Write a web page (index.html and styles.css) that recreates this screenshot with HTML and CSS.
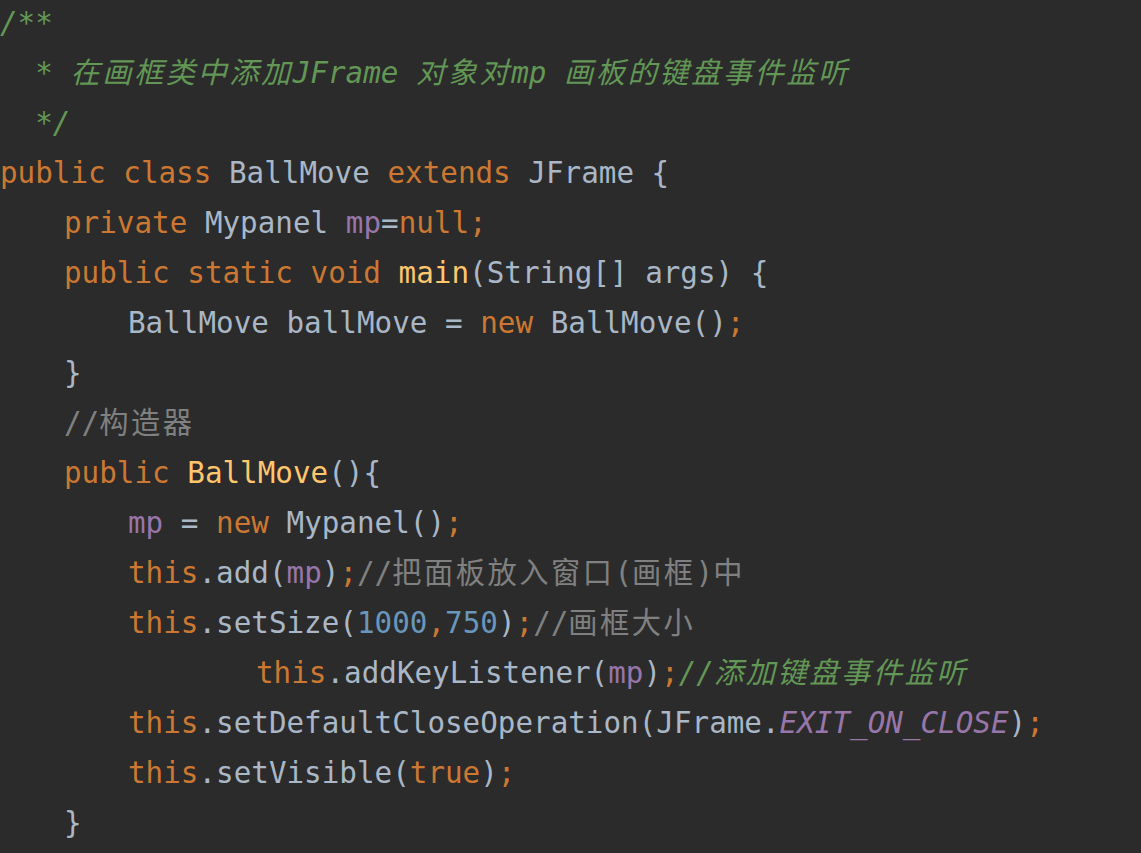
FILE: index.html
```html
<!DOCTYPE html>
<html lang="zh">
<head>
<meta charset="utf-8">
<title>BallMove.java</title>
<link rel="stylesheet" href="styles.css">
</head>
<body>
<div class="editor">
  <div class="line doc">/**</div>
  <div class="line doc">  * <span class="cjk">在画框类中添加</span>JFrame <span class="cjk">对象对</span>mp <span class="cjk">画板的键盘事件监听</span></div>
  <div class="line doc">  */</div>
  <div class="line"><span class="kw">public class </span>BallMove <span class="kw">extends </span>JFrame {</div>
  <div class="line i1"><span class="kw">private </span>Mypanel <span class="fld">mp</span>=<span class="kw">null;</span></div>
  <div class="line i1"><span class="kw">public static void </span><span class="fn">main</span>(String[] args) {</div>
  <div class="line i2">BallMove ballMove = <span class="kw">new </span>BallMove()<span class="kw">;</span></div>
  <div class="line i1">}</div>
  <div class="line i1 cm">//<span class="cjk">构造器</span></div>
  <div class="line i1"><span class="kw">public </span><span class="fn">BallMove</span>(){</div>
  <div class="line i2"><span class="fld">mp</span> = <span class="kw">new </span>Mypanel()<span class="kw">;</span></div>
  <div class="line i2"><span class="kw">this</span>.add(<span class="fld">mp</span>)<span class="kw">;</span><span class="cm">//<span class="cjk">把面板放入窗口</span>(<span class="cjk">画框</span>)<span class="cjk">中</span></span></div>
  <div class="line i2"><span class="kw">this</span>.setSize(<span class="num">1000</span><span class="kw">,</span><span class="num">750</span>)<span class="kw">;</span><span class="cm">//<span class="cjk">画框大小</span></span></div>
  <div class="line i4"><span class="kw">this</span>.addKeyListener(<span class="fld">mp</span>)<span class="kw">;</span><span class="todo">//<span class="cjk">添加键盘事件监听</span></span></div>
  <div class="line i2"><span class="kw">this</span>.setDefaultCloseOperation(JFrame.<span class="const">EXIT_ON_CLOSE</span>)<span class="kw">;</span></div>
  <div class="line i2"><span class="kw">this</span>.setVisible(<span class="kw">true</span>)<span class="kw">;</span></div>
  <div class="line i1">}</div>
</div>
</body>
</html>
```
FILE: styles.css
```css
html, body {
  margin: 0;
  padding: 0;
  background: #2b2b2b;
}
body {
  width: 1141px;
  height: 853px;
  overflow: hidden;
}
.editor {
  margin-top: -2px;
  font-family: "DejaVu Sans Mono", "Noto Sans CJK SC", monospace;
  font-size: 29.25px;
  line-height: 50px;
  color: #a9b7c6;
}
.line {
  height: 50px;
  white-space: pre;
}
.i1 { padding-left: 64px; }
.i2 { padding-left: 128px; }
.i4 { padding-left: 256px; }
.kw { color: #cc7832; }
.fld { color: #9876aa; }
.fn { color: #ffc66d; }
.num { color: #6897bb; }
.cm { color: #808080; }
.doc, .todo {
  color: #629755;
  font-style: italic;
}
.const {
  color: #9876aa;
  font-style: italic;
}
.cjk {
  font-family: "Noto Sans CJK SC", sans-serif;
  line-height: 1;
  letter-spacing: 2.5px;
}
```
